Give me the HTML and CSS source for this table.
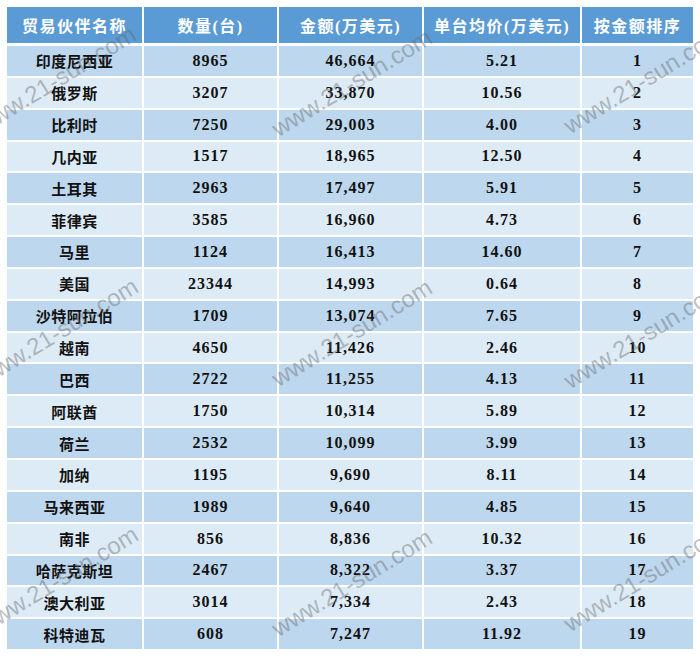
FILE: index.html
```html
<!DOCTYPE html>
<html lang="zh">
<head>
<meta charset="utf-8">
<title>贸易伙伴</title>
<link rel="stylesheet" href="styles.css">
</head>
<body>
<div class="page">
  <div class="grid">
    <div class="h">贸易伙伴名称</div><div class="h">数量(台)</div><div class="h">金额(万美元)</div><div class="h">单台均价(万美元)</div><div class="h">按金额排序</div>

    <div class="c a n">印度尼西亚</div><div class="c a">8965</div><div class="c a">46,664</div><div class="c a">5.21</div><div class="c a">1</div>
    <div class="c b n">俄罗斯</div><div class="c b">3207</div><div class="c b">33,870</div><div class="c b">10.56</div><div class="c b">2</div>
    <div class="c a n">比利时</div><div class="c a">7250</div><div class="c a">29,003</div><div class="c a">4.00</div><div class="c a">3</div>
    <div class="c b n">几内亚</div><div class="c b">1517</div><div class="c b">18,965</div><div class="c b">12.50</div><div class="c b">4</div>
    <div class="c a n">土耳其</div><div class="c a">2963</div><div class="c a">17,497</div><div class="c a">5.91</div><div class="c a">5</div>
    <div class="c b n">菲律宾</div><div class="c b">3585</div><div class="c b">16,960</div><div class="c b">4.73</div><div class="c b">6</div>
    <div class="c a n">马里</div><div class="c a">1124</div><div class="c a">16,413</div><div class="c a">14.60</div><div class="c a">7</div>
    <div class="c b n">美国</div><div class="c b">23344</div><div class="c b">14,993</div><div class="c b">0.64</div><div class="c b">8</div>
    <div class="c a n">沙特阿拉伯</div><div class="c a">1709</div><div class="c a">13,074</div><div class="c a">7.65</div><div class="c a">9</div>
    <div class="c b n">越南</div><div class="c b">4650</div><div class="c b">11,426</div><div class="c b">2.46</div><div class="c b">10</div>
    <div class="c a n">巴西</div><div class="c a">2722</div><div class="c a">11,255</div><div class="c a">4.13</div><div class="c a">11</div>
    <div class="c b n">阿联酋</div><div class="c b">1750</div><div class="c b">10,314</div><div class="c b">5.89</div><div class="c b">12</div>
    <div class="c a n">荷兰</div><div class="c a">2532</div><div class="c a">10,099</div><div class="c a">3.99</div><div class="c a">13</div>
    <div class="c b n">加纳</div><div class="c b">1195</div><div class="c b">9,690</div><div class="c b">8.11</div><div class="c b">14</div>
    <div class="c a n">马来西亚</div><div class="c a">1989</div><div class="c a">9,640</div><div class="c a">4.85</div><div class="c a">15</div>
    <div class="c b n">南非</div><div class="c b">856</div><div class="c b">8,836</div><div class="c b">10.32</div><div class="c b">16</div>
    <div class="c a n">哈萨克斯坦</div><div class="c a">2467</div><div class="c a">8,322</div><div class="c a">3.37</div><div class="c a">17</div>
    <div class="c b n">澳大利亚</div><div class="c b">3014</div><div class="c b">7,334</div><div class="c b">2.43</div><div class="c b">18</div>
    <div class="c a n">科特迪瓦</div><div class="c a">608</div><div class="c a">7,247</div><div class="c a">11.92</div><div class="c a">19</div>
  </div>

  <span class="wm w1">www.21-sun.com</span>
  <span class="wm w2">www.21-sun.com</span>
  <span class="wm w3">www.21-sun.com</span>
  <span class="wm w4">www.21-sun.com</span>
  <span class="wm w5">www.21-sun.com</span>
  <span class="wm w6">www.21-sun.com</span>
  <span class="wm w7">www.21-sun.com</span>
  <span class="wm w8">www.21-sun.com</span>
  <span class="wm w9">www.21-sun.com</span>
</div>
</body>
</html>
```

FILE: styles.css
```css
html, body {
  margin: 0;
  padding: 0;
  background: #ffffff;
}

.page {
  position: relative;
  width: 700px;
  height: 659px;
  overflow: hidden;
  padding: 7px 0 0 7px;
  box-sizing: border-box;
}

.grid {
  display: grid;
  width: 686px;
  grid-template-columns: 135px 133px 143px 156px 111px;
  grid-template-rows: 37px repeat(19, 29.85px);
  column-gap: 2px;
  row-gap: 2px;
  background: #ffffff;
}

.h {
  background: #5b9bd5;
  color: #ffffff;
  font-family: "Liberation Serif", "Noto Sans CJK SC", serif;
  font-weight: bold;
  font-size: 16px;
  letter-spacing: 1.5px;
  display: flex;
  align-items: center;
  justify-content: center;
  margin-bottom: 1px;
}

.c {
  font-family: "Liberation Serif", "Noto Sans CJK SC", serif;
  font-weight: bold;
  font-size: 16px;
  letter-spacing: 1px;
  color: #111111;
  display: flex;
  align-items: center;
  justify-content: center;
}

.n {
  font-size: 15px;
  letter-spacing: 0.5px;
}

.a { background: #bdd7ee; }
.b { background: #ddebf7; }

.wm {
  position: absolute;
  font-family: "Liberation Sans", Arial, sans-serif;
  font-size: 24px;
  color: rgba(100, 100, 100, 0.42);
  white-space: nowrap;
  transform: translate(-50%, -50%) rotate(-31.5deg);
  pointer-events: none;
}

.w1 { left: 56px;  top: 80px; }
.w2 { left: 352px; top: 83px; }
.w3 { left: 644px; top: 80px; }
.w4 { left: 58px;  top: 332px; }
.w5 { left: 352px; top: 333px; }
.w6 { left: 644px; top: 335px; }
.w7 { left: 58px;  top: 580px; }
.w8 { left: 352px; top: 583px; }
.w9 { left: 644px; top: 578px; }
```
